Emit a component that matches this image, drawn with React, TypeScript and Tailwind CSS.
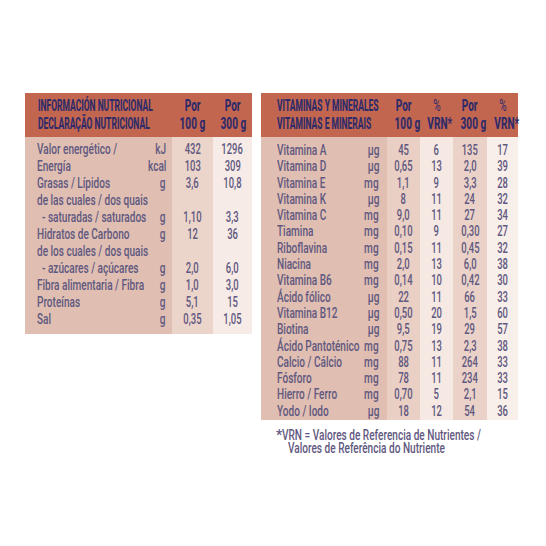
import React from "react";

const leftRows: [string, string, string, string][] = [
  ["Valor energético /", "kJ", "432", "1296"],
  ["Energía", "kcal", "103", "309"],
  ["Grasas / Lípidos", "g", "3,6", "10,8"],
  ["de las cuales / dos quais", "", "", ""],
  ["\u00a0\u00a0- saturadas / saturados", "g", "1,10", "3,3"],
  ["Hidratos de Carbono", "g", "12", "36"],
  ["de los cuales / dos quais", "", "", ""],
  ["\u00a0\u00a0- azúcares / açúcares", "g", "2,0", "6,0"],
  ["Fibra alimentaria / Fibra", "g", "1,0", "3,0"],
  ["Proteínas", "g", "5,1", "15"],
  ["Sal", "g", "0,35", "1,05"],
];

const rightRows: [string, string, string, string, string, string][] = [
  ["Vitamina A", "µg", "45", "6", "135", "17"],
  ["Vitamina D", "µg", "0,65", "13", "2,0", "39"],
  ["Vitamina E", "mg", "1,1", "9", "3,3", "28"],
  ["Vitamina K", "µg", "8", "11", "24", "32"],
  ["Vitamina C", "mg", "9,0", "11", "27", "34"],
  ["Tiamina", "mg", "0,10", "9", "0,30", "27"],
  ["Riboflavina", "mg", "0,15", "11", "0,45", "32"],
  ["Niacina", "mg", "2,0", "13", "6,0", "38"],
  ["Vitamina B6", "mg", "0,14", "10", "0,42", "30"],
  ["Ácido fólico", "µg", "22", "11", "66", "33"],
  ["Vitamina B12", "µg", "0,50", "20", "1,5", "60"],
  ["Biotina", "µg", "9,5", "19", "29", "57"],
  ["Ácido Pantoténico", "mg", "0,75", "13", "2,3", "38"],
  ["Calcio / Cálcio", "mg", "88", "11", "264", "33"],
  ["Fósforo", "mg", "78", "11", "234", "33"],
  ["Hierro / Ferro", "mg", "0,70", "5", "2,1", "15"],
  ["Yodo / Iodo", "µg", "18", "12", "54", "36"],
];

// condensed look: the reference uses a narrow DIN-like face
const L = ({ children }: { children: React.ReactNode }) => (
  <span className="inline-block whitespace-nowrap origin-left scale-x-[0.67]">{children}</span>
);
const R = ({ children }: { children: React.ReactNode }) => (
  <span className="inline-block whitespace-nowrap origin-right scale-x-[0.67]">{children}</span>
);
const C = ({ children }: { children: React.ReactNode }) => (
  <span className="inline-block whitespace-nowrap origin-center scale-x-[0.63]">{children}</span>
);
const H = ({ children }: { children: React.ReactNode }) => (
  <span className="inline-block whitespace-nowrap origin-left scale-x-[0.53]">{children}</span>
);
const HC = ({ children }: { children: React.ReactNode }) => (
  <span className="inline-block whitespace-nowrap origin-center scale-x-[0.63]">{children}</span>
);
const F = ({ children }: { children: React.ReactNode }) => (
  <span className="inline-block whitespace-nowrap origin-left scale-x-[0.72]">{children}</span>
);

export default function App() {
  return (
    <div className="w-[546px] h-[546px] overflow-hidden bg-white font-['Roboto',sans-serif] font-medium text-[#5f5880]">
      <div className="flex gap-[9px] pl-[25px] pt-[93px] items-start">
        {/* Left table */}
        <div className="w-[227px]">
          <div className="grid grid-cols-[147px_41px_39px] bg-[#c3664f] h-[44px] items-center text-[#2f2b6a] font-extrabold text-[16px] leading-[18px]">
            <div className="pl-[13px]">
              <div><H>INFORMACIÓN NUTRICIONAL</H></div>
              <div><H>DECLARAÇÃO NUTRICIONAL</H></div>
            </div>
            <div className="text-center">
              <div><HC>Por</HC></div>
              <div><HC>100 g</HC></div>
            </div>
            <div className="text-center">
              <div><HC>Por</HC></div>
              <div><HC>300 g</HC></div>
            </div>
          </div>
          <div className="flex text-[15px] leading-[17px]">
            <div className="w-[147px] bg-[#e0bfb2] pt-[4px] pb-[6px] pl-[12px] pr-[6px]">
              {leftRows.map((r, i) => (
                <div key={i} className="grid grid-cols-[minmax(0,1fr)_auto] h-[17px]">
                  <div><L>{r[0]}</L></div>
                  <div className="text-right"><R>{r[1]}</R></div>
                </div>
              ))}
            </div>
            <div className="w-[41px] bg-[#ebd4ca] pt-[4px] pb-[6px] text-center">
              {leftRows.map((r, i) => (
                <div key={i} className="h-[17px]"><C>{r[2]}</C></div>
              ))}
            </div>
            <div className="w-[39px] bg-[#f6ebe6] pt-[4px] pb-[6px] text-center">
              {leftRows.map((r, i) => (
                <div key={i} className="h-[17px]"><C>{r[3]}</C></div>
              ))}
            </div>
          </div>
        </div>

        {/* Right table */}
        <div className="w-[257px]">
          <div className="grid grid-cols-[126px_33px_33px_34px_31px] bg-[#c3664f] h-[44px] items-center text-[#2f2b6a] font-extrabold text-[16px] leading-[18px]">
            <div className="pl-[16px]">
              <div><H>VITAMINAS Y MINERALES</H></div>
              <div><H>VITAMINAS E MINERAIS</H></div>
            </div>
            <div className="text-center">
              <div><HC>Por</HC></div>
              <div><HC>100 g</HC></div>
            </div>
            <div className="text-center">
              <div className="font-normal"><HC>%</HC></div>
              <div><HC>VRN*</HC></div>
            </div>
            <div className="text-center">
              <div><HC>Por</HC></div>
              <div><HC>300 g</HC></div>
            </div>
            <div className="text-center">
              <div className="font-normal"><HC>%</HC></div>
              <div><HC>VRN*</HC></div>
            </div>
          </div>
          <div className="flex text-[15px] leading-[16.3px]">
            <div className="w-[126px] bg-[#e0beb1] pt-[5px] pb-[1px] pl-[16px] pr-[8px]">
              {rightRows.map((r, i) => (
                <div key={i} className="grid grid-cols-[minmax(0,1fr)_auto] h-[16.3px]">
                  <div><L>{r[0]}</L></div>
                  <div className="text-right"><R>{r[1]}</R></div>
                </div>
              ))}
            </div>
            <div className="w-[33px] bg-[#eacfc4] pt-[5px] pb-[1px] text-center">
              {rightRows.map((r, i) => (
                <div key={i} className="h-[16.3px]"><C>{r[2]}</C></div>
              ))}
            </div>
            <div className="w-[33px] bg-[#f6e9e4] pt-[5px] pb-[1px] text-center">
              {rightRows.map((r, i) => (
                <div key={i} className="h-[16.3px]"><C>{r[3]}</C></div>
              ))}
            </div>
            <div className="w-[34px] bg-[#ebd2c8] pt-[5px] pb-[1px] text-center">
              {rightRows.map((r, i) => (
                <div key={i} className="h-[16.3px]"><C>{r[4]}</C></div>
              ))}
            </div>
            <div className="w-[31px] bg-[#f8eeea] pt-[5px] pb-[1px] text-center">
              {rightRows.map((r, i) => (
                <div key={i} className="h-[16.3px]"><C>{r[5]}</C></div>
              ))}
            </div>
          </div>
          <div className="pl-[15px] pt-[9px] text-[14px] leading-[13px]">
            <div className="flex">
              <span className="w-[12px]">*</span>
              <F>VRN = Valores de Referencia de Nutrientes /</F>
            </div>
            <div className="pl-[12px]"><F>Valores de Referência do Nutriente</F></div>
          </div>
        </div>
      </div>
    </div>
  );
}
